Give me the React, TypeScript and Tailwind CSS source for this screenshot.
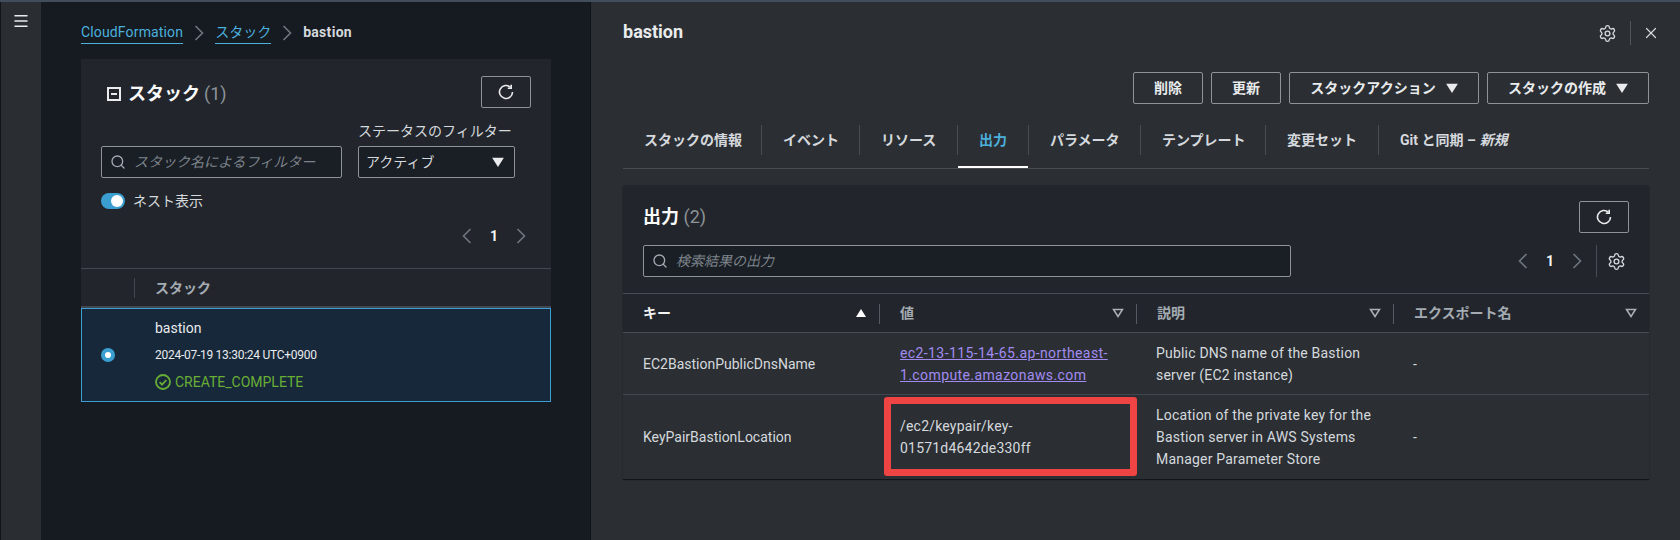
import { Menu, Search, Settings, X } from "lucide-react";

const tabs = [
    { label: "スタックの情報", width: "w-[139px]" },
    { label: "イベント", width: "w-[98px]" },
    { label: "リソース", width: "w-[98px]" },
    { label: "出力", width: "w-[71px]", active: true },
    { label: "パラメータ", width: "w-[112px]" },
    { label: "テンプレート", width: "w-[125px]" },
    { label: "変更セット", width: "w-[113px]" },
];

function RefreshIcon() {
    return (
        <svg width="16" height="16" viewBox="0 0 16 16" fill="none" stroke="#e9ebed" strokeWidth="1.6">
            <path d="M14.5 8a6.5 6.5 0 1 1-2-4.7" />
            <path d="M13.2 0.8v3.4H9.8" strokeWidth="1.6" />
        </svg>
    );
}

function RefreshButton() {
    return (
        <button className="flex h-[32px] w-[50px] items-center justify-center rounded-[2px] border border-[#8d9399]">
            <RefreshIcon />
        </button>
    );
}

function Caret({ open = false }: { open?: boolean }) {
    return (
        <svg width="12" height="10" viewBox="0 0 12 10">
            <path
                d="M1.5 1.5h9L6 8.5z"
                fill={open ? "none" : "#e9ebed"}
                stroke={open ? "#aab0b6" : "#e9ebed"}
                strokeWidth="1.5"
            />
        </svg>
    );
}

function SortUp() {
    return (
        <svg width="12" height="10" viewBox="0 0 12 10">
            <path d="M1 9h10L6 1z" fill="#ffffff" />
        </svg>
    );
}

function Chevron({ left = false, className = "" }: { left?: boolean; className?: string }) {
    return (
        <svg width="10" height="16" viewBox="0 0 10 16" fill="none" stroke="#6f767e" strokeWidth="1.6" className={`shrink-0 ${className}`}>
            <path d={left ? "M8.5 1L1.5 8l7 7" : "M1.5 1l7 7-7 7"} />
        </svg>
    );
}

function Pager({ className }: { className: string }) {
    return (
        <div className={`flex items-center ${className}`}>
            <Chevron left />
            <span className="mx-[17px] w-[10px] text-center text-[14px] font-bold text-[#f2f3f3]">1</span>
            <Chevron />
        </div>
    );
}

function ActionButton({ label, caret, width }: { label: string; caret?: boolean; width: string }) {
    return (
        <button
            className={`flex h-[32px] items-center justify-center gap-[10px] rounded-[2px] border border-[#8d9399] text-[14px] font-bold text-[#e9ebed] ${width}`}
        >
            {label}
            {caret && <Caret />}
        </button>
    );
}

function HeaderCell({ label, sort, last }: { label: string; sort?: "up" | "open"; last?: boolean }) {
    return (
        <div className={`relative flex items-center justify-between pl-[20px] ${last ? "pr-[12px]" : "pr-[13px]"}`}>
            <span className={`text-[14px] font-bold ${sort === "up" ? "text-[#f2f3f3]" : "text-[#a4abb2]"}`}>{label}</span>
            {sort === "up" ? <SortUp /> : <Caret open />}
            {!last && <span className="absolute right-0 top-[10px] h-[20px] w-px bg-[#555b63]" />}
        </div>
    );
}

export default function App() {
    return (
        <div className="flex h-[540px] w-[1680px] flex-col overflow-hidden bg-[#161b21] font-['Roboto','Noto_Sans_CJK_JP',sans-serif] text-[14px] leading-[22px] text-[#d5d9dd]">
            <div className="h-[2px] shrink-0 bg-[#414d5c]" />
            <div className="flex min-h-0 flex-1">
                {/* side nav */}
                <div className="w-[41px] shrink-0 border-l border-[#111418] bg-[#2a2e33] pl-[11px] pt-[10px]">
                    <Menu size={18} strokeWidth={2} className="text-[#e9ebed]" />
                </div>

                {/* stack list */}
                <div className="w-[549px] shrink-0 pl-[40px] pr-[39px]">
                    <div className="flex h-[57px] items-start pt-[20px] text-[14px]">
                        <span className="border-b border-[#4bb0dc] leading-[21px] tracking-[0.15px] text-[#4bb0dc]">CloudFormation</span>
                        <Chevron className="mx-[11px] mt-[3px]" />
                        <span className="border-b border-[#4bb0dc] leading-[21px] text-[#4bb0dc]">スタック</span>
                        <Chevron className="mx-[11px] mt-[3px]" />
                        <span className="font-bold leading-[21px] tracking-[0.3px] text-[#d5d9dd]">bastion</span>
                    </div>

                    <div className="bg-[#22262c]">
                        <div className="h-[210px] border-b border-[#414750] pt-[17px]">
                            <div className="flex h-[32px] items-center justify-between pl-[26px] pr-[20px]">
                                <div className="flex items-center pt-[4px]">
                                    <span className="mr-[7px] flex h-[14px] w-[14px] items-center justify-center border-2 border-[#e9ebed]">
                                        <span className="h-[2px] w-[6px] bg-[#e9ebed]" />
                                    </span>
                                    <span className="text-[18px] font-bold text-[#fafafa]">スタック</span>
                                    <span className="ml-[4px] text-[18px] text-[#8d9399]">(1)</span>
                                </div>
                                <RefreshButton />
                            </div>

                            <div className="mt-[12px] flex items-end gap-[16px] pl-[20px]">
                                <div className="flex h-[32px] w-[241px] items-center rounded-[2px] border border-[#8d9399] bg-[#1a1e25] pl-[8px]">
                                    <Search size={16} strokeWidth={2} className="text-[#a4abb2]" />
                                    <span className="ml-[8px] text-[14px] italic text-[#7c838a]">スタック名によるフィルター</span>
                                </div>
                                <div className="w-[157px]">
                                    <div className="mb-[4px] whitespace-nowrap text-[14px] text-[#d5d9dd]">ステータスのフィルター</div>
                                    <div className="flex h-[32px] items-center justify-between rounded-[2px] border border-[#8d9399] bg-[#1a1e25] pl-[7px] pr-[10px]">
                                        <span className="text-[#d5d9dd]">アクティブ</span>
                                        <Caret />
                                    </div>
                                </div>
                            </div>

                            <div className="mt-[15px] flex h-[16px] items-center pl-[20px]">
                                <span className="flex h-[16px] w-[24px] items-center justify-end rounded-full bg-[#3a9fd0] pr-[2px]">
                                    <span className="h-[12px] w-[12px] rounded-full bg-white" />
                                </span>
                                <span className="ml-[8px] text-[#d5d9dd]">ネスト表示</span>
                            </div>

                            <Pager className="mt-[16px] justify-end pr-[25px]" />
                        </div>

                        <div className="flex h-[39px] border-b-2 border-[#414750]">
                            <div className="mt-[9px] h-[20px] w-[54px] border-r border-[#414750]" />
                            <span className="ml-[20px] self-center text-[14px] font-bold text-[#a4abb2]">スタック</span>
                        </div>
                    </div>

                    <div className="flex h-[94px] items-center border border-[#3a9fd0] bg-[#17283b]">
                        <span className="ml-[19px] flex h-[14px] w-[14px] items-center justify-center rounded-full bg-[#3a9fd0]">
                            <span className="h-[6px] w-[6px] rounded-full bg-white" />
                        </span>
                        <div className="ml-[40px] flex flex-col gap-[5px]">
                            <span className="text-[#e9ebed]">bastion</span>
                            <span className="text-[12px] tracking-[-0.27px] text-[#e9ebed]">2024-07-19 13:30:24 UTC+0900</span>
                            <span className="flex items-center gap-[4px] text-[#69ae34]">
                                <svg width="16" height="16" viewBox="0 0 16 16" fill="none" stroke="#69ae34" strokeWidth="1.8">
                                    <circle cx="8" cy="8" r="7" />
                                    <path d="M4.6 8.2l2.4 2.4 4.4-4.6" />
                                </svg>
                                CREATE_COMPLETE
                            </span>
                        </div>
                    </div>
                </div>

                {/* detail split panel */}
                <div className="flex-1 border-l border-[#0f1216] bg-[#2b2f34] pl-[32px] pr-[31px]">
                    <div className="flex h-[70px] items-start justify-between pt-[19px]">
                        <span className="text-[18px] font-bold text-[#e9ebed]">bastion</span>
                        <div className="mr-[-11px] flex items-center">
                            <Settings size={19} strokeWidth={1.7} className="text-[#d5d9dd]" />
                            <span className="ml-[13px] mr-[11px] h-[24px] w-px bg-[#50565d]" />
                            <X size={18} strokeWidth={1.6} className="text-[#d5d9dd]" />
                        </div>
                    </div>

                    <div className="flex justify-end gap-[8px]">
                        <ActionButton label="削除" width="w-[70px]" />
                        <ActionButton label="更新" width="w-[70px]" />
                        <ActionButton label="スタックアクション" caret width="w-[190px]" />
                        <ActionButton label="スタックの作成" caret width="w-[162px]" />
                    </div>

                    <div className="relative mt-[21px] flex h-[44px] items-start border-b border-[#474d55]">
                        {tabs.map((tab) => (
                            <div
                                key={tab.label}
                                className={`relative flex h-[30px] items-center border-r border-[#474d55] pl-[21px] text-[14px] font-bold ${tab.width} ${tab.active ? "text-[#4bb0dc]" : "text-[#d5d9dd]"}`}
                            >
                                {tab.label}
                                {tab.active && <span className="absolute bottom-[-13px] left-0 right-0 h-[2px] bg-white" />}
                            </div>
                        ))}
                        <div className="flex h-[30px] items-center pl-[21px] text-[14px] font-bold text-[#d5d9dd]">
                            Git と同期 – <em className="ml-[4px]">新規</em>
                        </div>
                    </div>

                    <div className="relative mt-[16px] h-[294px] bg-[#22262c] shadow-[0_1px_1px_#12151a]">
                        <div className="h-[109px] border-b border-[#474d55] pt-[16px]">
                            <div className="flex h-[32px] items-center justify-between pl-[20px] pr-[20px]">
                                <div className="text-[18px] font-bold text-[#fafafa]">
                                    出力 <span className="font-normal text-[#8d9399]">(2)</span>
                                </div>
                                <RefreshButton />
                            </div>
                            <div className="mt-[12px] flex h-[32px] items-center pl-[20px]">
                                <div className="flex h-[32px] w-[648px] items-center rounded-[2px] border border-[#8d9399] bg-[#1a1e25] pl-[8px]">
                                    <Search size={16} strokeWidth={2} className="text-[#a4abb2]" />
                                    <span className="ml-[8px] italic text-[#7c838a]">検索結果の出力</span>
                                </div>
                                <Pager className="ml-[227px]" />
                                <span className="ml-[14px] h-[32px] w-px bg-[#474d55]" />
                                <Settings size={19} strokeWidth={1.7} className="ml-[10px] text-[#d5d9dd]" />
                            </div>
                        </div>

                        <div className="grid h-[39px] grid-cols-[257px_257px_257px_1fr] border-b border-[#474d55]">
                            <HeaderCell label="キー" sort="up" />
                            <HeaderCell label="値" sort="open" />
                            <HeaderCell label="説明" sort="open" />
                            <HeaderCell label="エクスポート名" sort="open" last />
                        </div>

                        <div className="grid h-[62px] grid-cols-[257px_257px_257px_1fr] items-center border-b border-[#414750] bg-[#2b2f34]">
                            <div className="pl-[20px]">EC2BastionPublicDnsName</div>
                            <a className="pl-[20px] pr-[16px] tracking-[0.4px] text-[#a28bf0] underline">ec2-13-115-14-65.ap-northeast-1.compute.amazonaws.com</a>
                            <div className="pl-[19px] pr-[16px] tracking-[0.2px]">Public DNS name of the Bastion server (EC2 instance)</div>
                            <div className="pl-[19px]">-</div>
                        </div>
                        <div className="grid h-[84px] grid-cols-[257px_257px_257px_1fr] items-center bg-[#2b2f34]">
                            <div className="pl-[20px]">KeyPairBastionLocation</div>
                            <div className="pl-[20px] pr-[20px] break-words tracking-[0.2px]">/ec2/keypair/key-01571d4642de330ff</div>
                            <div className="pl-[19px] pr-[16px] tracking-[0.2px]">Location of the private key for the Bastion server in AWS Systems Manager Parameter Store</div>
                            <div className="pl-[19px]">-</div>
                        </div>

                        {/* annotation drawn over the screenshot */}
                        <div className="absolute left-[261px] top-[212px] h-[79px] w-[253px] rounded-[3px] border-[7px] border-[#ee4444]" />
                    </div>
                </div>
            </div>
        </div>
    );
}
